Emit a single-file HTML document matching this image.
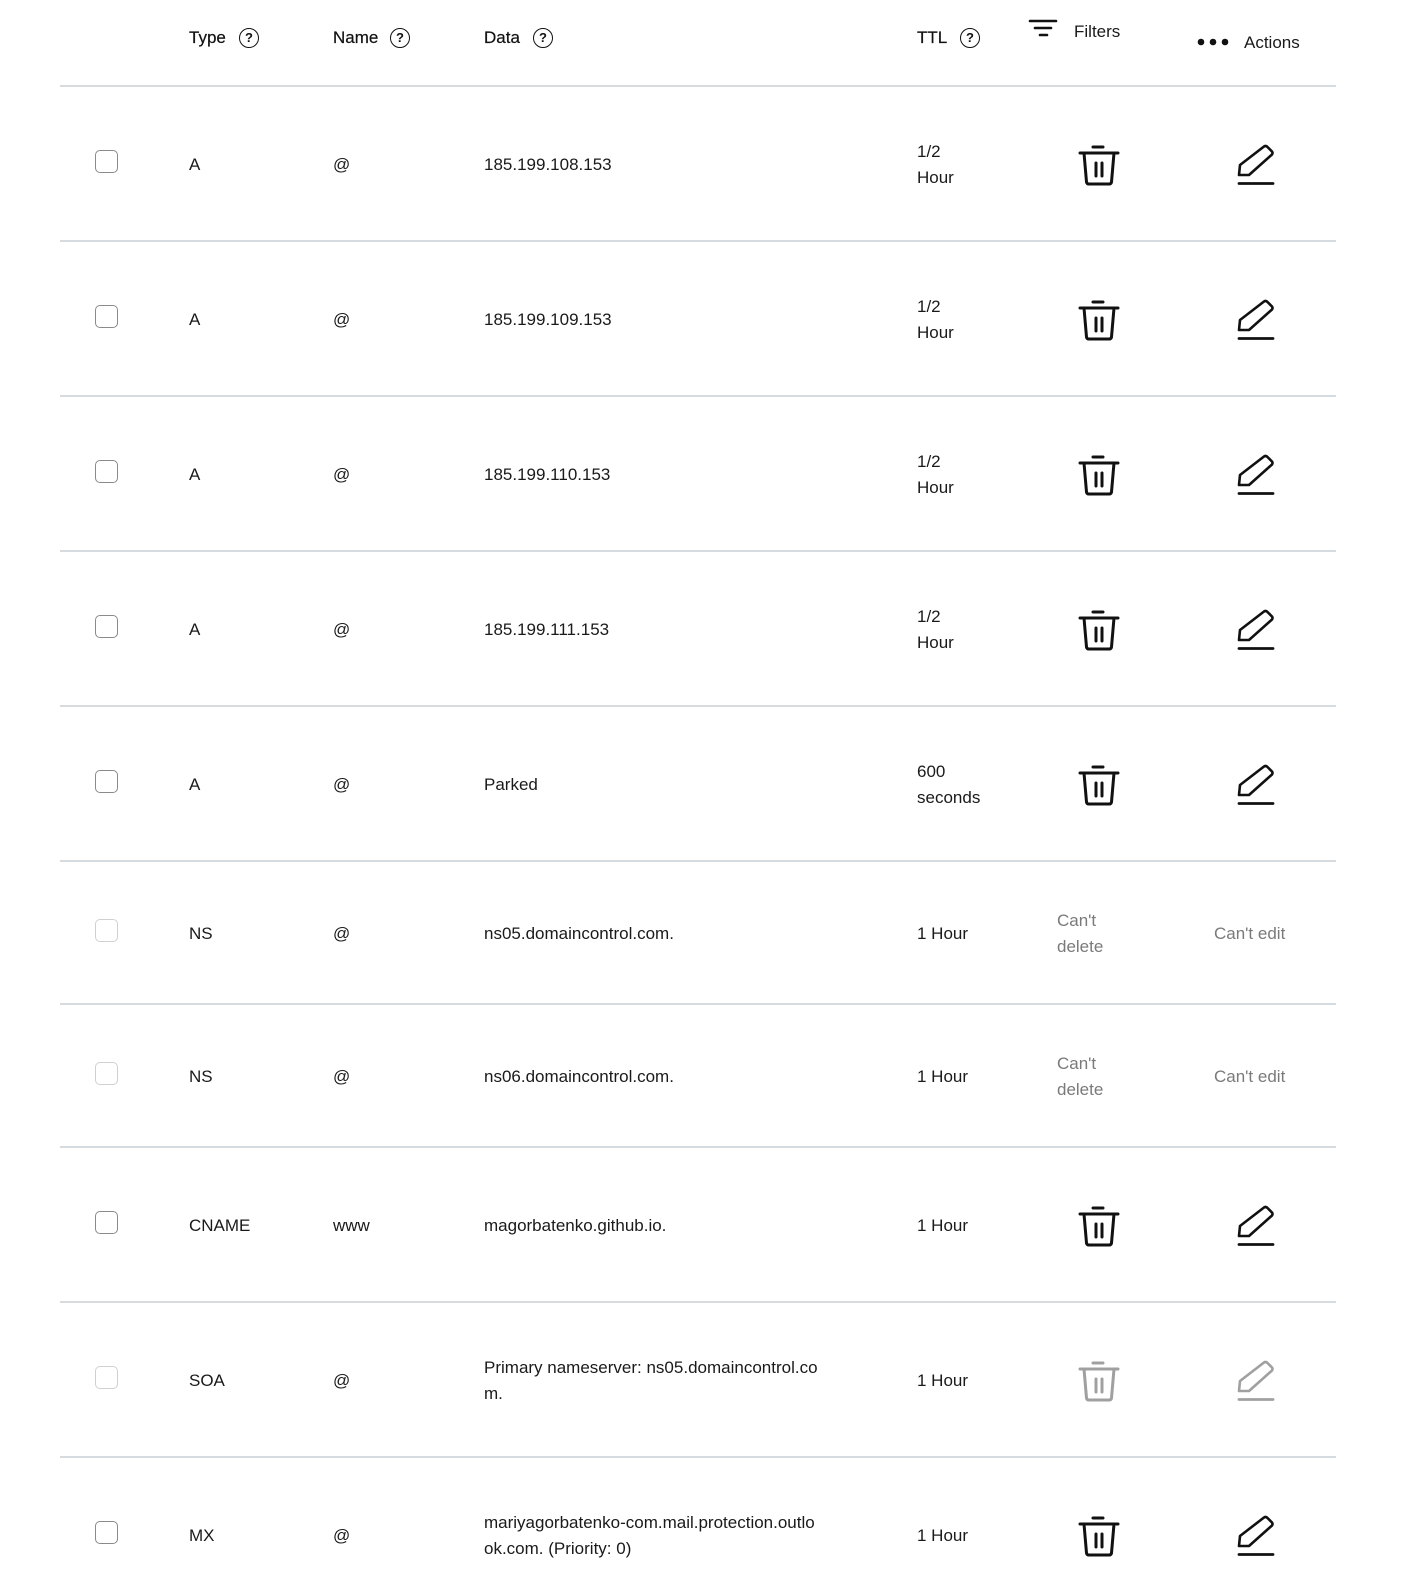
<!DOCTYPE html>
<html><head><meta charset="utf-8">
<style>
*{margin:0;padding:0;box-sizing:border-box}
html{width:1414px;height:1578px;overflow:hidden}
body{width:1414px;height:1578px;background:#fff;position:relative;overflow:hidden;font-family:"Liberation Sans",sans-serif;font-size:17px;color:#1a1a1a}
.a{position:absolute;white-space:nowrap;line-height:26px}
.h{-webkit-text-stroke:0.2px #111;color:#111}
.line{position:absolute;left:60px;width:1276px;height:2px;background:#d6dbe0}
.cb{position:absolute;left:95px;width:23px;height:23px;border:1.5px solid #8a8a8a;border-radius:5px}
.cb.d{border-color:#d0d0d0}
.q{position:absolute;width:20px;height:20px;border:1.6px solid #111;border-radius:50%;font-size:13px;line-height:17px;text-align:center;font-weight:bold;color:#111}
svg{position:absolute}
.g{color:#7a7a7a}
</style></head><body>
<svg width="0" height="0" style="left:0;top:0"><defs>
<g id="tr" fill="none" stroke-width="3" stroke-linecap="round" stroke-linejoin="round"><path d="M15 3h10M2 9h38M6 9l2.5 29q0.3 2 2.3 2h20.4q2 0 2.3-2L36 9M18 19v13M24 19v13"/></g>
<g id="pe" fill="none" stroke-width="2.6" stroke-linecap="round" stroke-linejoin="round"><path d="M3 31L4 21L28 2.5Q30 1.3 31.5 3L36 7.5Q37 9 36 10.5L13 31Z"/><path d="M3 39.5h34" stroke-width="2.8"/></g>
</defs></svg>
<div class="a h" style="left:189px;top:25px">Type</div><div class="q" style="left:239px;top:28px">?</div>
<div class="a h" style="left:333px;top:25px">Name</div><div class="q" style="left:390px;top:28px">?</div>
<div class="a h" style="left:484px;top:25px">Data</div><div class="q" style="left:533px;top:28px">?</div>
<div class="a h" style="left:917px;top:25px">TTL</div><div class="q" style="left:960px;top:28px">?</div>
<svg style="left:1028px;top:18px" width="30" height="26"><path d="M2 3h26M7 10h16M12 17h7" stroke="#111" stroke-width="2.6" stroke-linecap="round"/></svg>
<div class="a" style="left:1074px;top:19px">Filters</div>
<svg style="left:1196px;top:36px" width="36" height="12"><circle cx="5" cy="6" r="3.3" fill="#111"/><circle cx="17" cy="6" r="3.3" fill="#111"/><circle cx="29" cy="6" r="3.3" fill="#111"/></svg>
<div class="a" style="left:1244px;top:30px">Actions</div>

<div class="line" style="top:85px"></div>
<div class="line" style="top:240px"></div>
<div class="line" style="top:395px"></div>
<div class="line" style="top:550px"></div>
<div class="line" style="top:705px"></div>
<div class="line" style="top:860px"></div>
<div class="line" style="top:1003px"></div>
<div class="line" style="top:1146px"></div>
<div class="line" style="top:1301px"></div>
<div class="line" style="top:1456px"></div>

<div class="cb" style="top:150px"></div><div class="a" style="left:189px;top:152px">A</div><div class="a" style="left:333px;top:152px">@</div><div class="a" style="left:484px;top:152px">185.199.108.153</div><div class="a" style="left:917px;top:139px">1/2<br>Hour</div>
<div class="cb" style="top:305px"></div><div class="a" style="left:189px;top:307px">A</div><div class="a" style="left:333px;top:307px">@</div><div class="a" style="left:484px;top:307px">185.199.109.153</div><div class="a" style="left:917px;top:294px">1/2<br>Hour</div>
<div class="cb" style="top:460px"></div><div class="a" style="left:189px;top:462px">A</div><div class="a" style="left:333px;top:462px">@</div><div class="a" style="left:484px;top:462px">185.199.110.153</div><div class="a" style="left:917px;top:449px">1/2<br>Hour</div>
<div class="cb" style="top:615px"></div><div class="a" style="left:189px;top:617px">A</div><div class="a" style="left:333px;top:617px">@</div><div class="a" style="left:484px;top:617px">185.199.111.153</div><div class="a" style="left:917px;top:604px">1/2<br>Hour</div>
<div class="cb" style="top:770px"></div><div class="a" style="left:189px;top:772px">A</div><div class="a" style="left:333px;top:772px">@</div><div class="a" style="left:484px;top:772px">Parked</div><div class="a" style="left:917px;top:759px">600<br>seconds</div>
<div class="cb d" style="top:919px"></div><div class="a" style="left:189px;top:921px">NS</div><div class="a" style="left:333px;top:921px">@</div><div class="a" style="left:484px;top:921px">ns05.domaincontrol.com.</div><div class="a" style="left:917px;top:921px">1 Hour</div><div class="a g" style="left:1057px;top:908px">Can't<br>delete</div><div class="a g" style="left:1214px;top:921px">Can't edit</div>
<div class="cb d" style="top:1062px"></div><div class="a" style="left:189px;top:1064px">NS</div><div class="a" style="left:333px;top:1064px">@</div><div class="a" style="left:484px;top:1064px">ns06.domaincontrol.com.</div><div class="a" style="left:917px;top:1064px">1 Hour</div><div class="a g" style="left:1057px;top:1051px">Can't<br>delete</div><div class="a g" style="left:1214px;top:1064px">Can't edit</div>
<div class="cb" style="top:1211px"></div><div class="a" style="left:189px;top:1213px">CNAME</div><div class="a" style="left:333px;top:1213px">www</div><div class="a" style="left:484px;top:1213px">magorbatenko.github.io.</div><div class="a" style="left:917px;top:1213px">1 Hour</div>
<div class="cb d" style="top:1366px"></div><div class="a" style="left:189px;top:1368px">SOA</div><div class="a" style="left:333px;top:1368px">@</div><div class="a" style="left:484px;top:1355px">Primary nameserver: ns05.domaincontrol.co<br>m.</div><div class="a" style="left:917px;top:1368px">1 Hour</div>
<div class="cb" style="top:1521px"></div><div class="a" style="left:189px;top:1523px">MX</div><div class="a" style="left:333px;top:1523px">@</div><div class="a" style="left:484px;top:1510px">mariyagorbatenko-com.mail.protection.outlo<br>ok.com. (Priority: 0)</div><div class="a" style="left:917px;top:1523px">1 Hour</div>

<svg style="left:1078px;top:144px" width="42" height="44" stroke="#111"><use href="#tr"/></svg>
<svg style="left:1236px;top:144px" width="42" height="44" stroke="#111"><use href="#pe"/></svg>
<svg style="left:1078px;top:299px" width="42" height="44" stroke="#111"><use href="#tr"/></svg>
<svg style="left:1236px;top:299px" width="42" height="44" stroke="#111"><use href="#pe"/></svg>
<svg style="left:1078px;top:454px" width="42" height="44" stroke="#111"><use href="#tr"/></svg>
<svg style="left:1236px;top:454px" width="42" height="44" stroke="#111"><use href="#pe"/></svg>
<svg style="left:1078px;top:609px" width="42" height="44" stroke="#111"><use href="#tr"/></svg>
<svg style="left:1236px;top:609px" width="42" height="44" stroke="#111"><use href="#pe"/></svg>
<svg style="left:1078px;top:764px" width="42" height="44" stroke="#111"><use href="#tr"/></svg>
<svg style="left:1236px;top:764px" width="42" height="44" stroke="#111"><use href="#pe"/></svg>
<svg style="left:1078px;top:1205px" width="42" height="44" stroke="#111"><use href="#tr"/></svg>
<svg style="left:1236px;top:1205px" width="42" height="44" stroke="#111"><use href="#pe"/></svg>
<svg style="left:1078px;top:1360px" width="42" height="44" stroke="#a0a0a0"><use href="#tr"/></svg>
<svg style="left:1236px;top:1360px" width="42" height="44" stroke="#a0a0a0"><use href="#pe"/></svg>
<svg style="left:1078px;top:1515px" width="42" height="44" stroke="#111"><use href="#tr"/></svg>
<svg style="left:1236px;top:1515px" width="42" height="44" stroke="#111"><use href="#pe"/></svg>
</body></html>
